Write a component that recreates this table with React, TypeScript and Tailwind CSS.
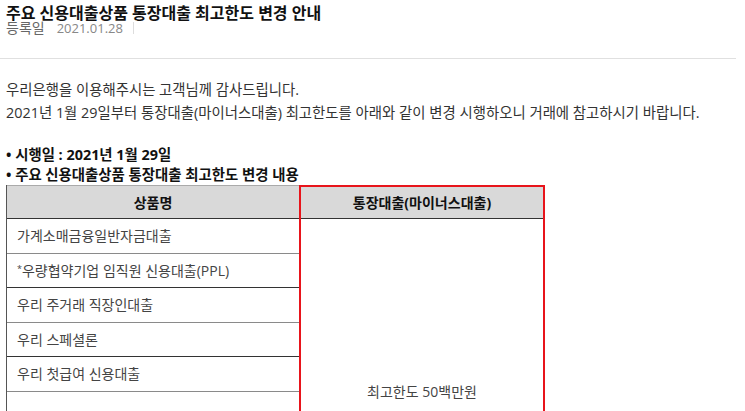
import React from 'react';

const rows = [
  { name: '가계소매금융일반자금대출', line: 'border-[#8a8a8a]' },
  { name: '*우량협약기업 임직원 신용대출(PPL)', line: 'border-[#333]', star: true },
  { name: '우리 주거래 직장인대출', line: 'border-[#8a8a8a]' },
  { name: '우리 스페셜론', line: 'border-[#333]' },
  { name: '우리 첫급여 신용대출', line: 'border-[#8a8a8a]' },
  { name: '', line: 'border-[#333]' },
  { name: '', line: 'border-[#8a8a8a]' },
  { name: '', line: 'border-[#333]' },
  { name: '', line: 'border-[#8a8a8a]' },
  { name: '', line: 'border-[#333]' },
];

export default function App() {
  return (
    <div className="w-[745px] h-[411px] overflow-hidden bg-white text-[#333] font-['Open_Sans','Noto_Sans_CJK_KR',sans-serif]">
      {/* Header */}
      <div className="px-[6px] pt-[3px]">
        <h1 className="text-[16px] leading-[20px] font-bold text-[#111]">주요 신용대출상품 통장대출 최고한도 변경 안내</h1>
        <div className="flex items-center text-[14px] leading-[20px] mt-[-5px]">
          <span className="text-[#666]">등록일</span>
          <span className="ml-[12px] text-[13px] text-[#888]">2021.01.28</span>
          <span className="ml-[10px] w-px h-[12px] bg-[#ddd]"></span>
        </div>
      </div>
      <div className="mt-[20px] w-[736px] h-px bg-[#e0e0e0]"></div>

      {/* Body */}
      <div className="px-[6px] pt-[19px] text-[14.4px] leading-[23px]">
        <p>우리은행을 이용해주시는 고객님께 감사드립니다.</p>
        <p>2021년 1월 29일부터 통장대출(마이너스대출) 최고한도를 아래와 같이 변경 시행하오니 거래에 참고하시기 바랍니다.</p>

        <div className="mt-[21px] font-bold text-[#111] leading-[20px]">
          <p>• 시행일 : 2021년 1월 29일</p>
          <p>• 주요 신용대출상품 통장대출 최고한도 변경 내용</p>
        </div>

        {/* Table */}
        <div className="flex text-[14px]">
          <div className="w-[293px] border-l border-[#555]">
            <div className="h-[34px] bg-[#d9d9d9] border-t border-t-[#aaa] border-b border-b-[#333] flex items-center justify-center font-bold text-[14px] text-[#111]">
              상품명
            </div>
            {rows.map((r, i) => (
              <div key={i} className={`h-[34.5px] border-b ${r.line} flex items-center pl-[10px] text-[#444]`}>
                {r.star ? (
                  <span>
                    <span className="text-[9px] align-top relative top-[-2px]">*</span>
                    우량협약기업 임직원 신용대출(PPL)
                  </span>
                ) : (
                  r.name
                )}
              </div>
            ))}
          </div>
          <div className="w-[246px] border-2 border-[#e8141b] flex flex-col">
            <div className="h-[32px] bg-[#d9d9d9] border-b border-[#333] flex items-center justify-center font-bold text-[14px] text-[#111]">
              통장대출(마이너스대출)
            </div>
            <div className="h-[345px] flex items-center justify-center text-[14px] text-[#444]">
              최고한도 50백만원
            </div>
          </div>
        </div>
      </div>
    </div>
  );
}
